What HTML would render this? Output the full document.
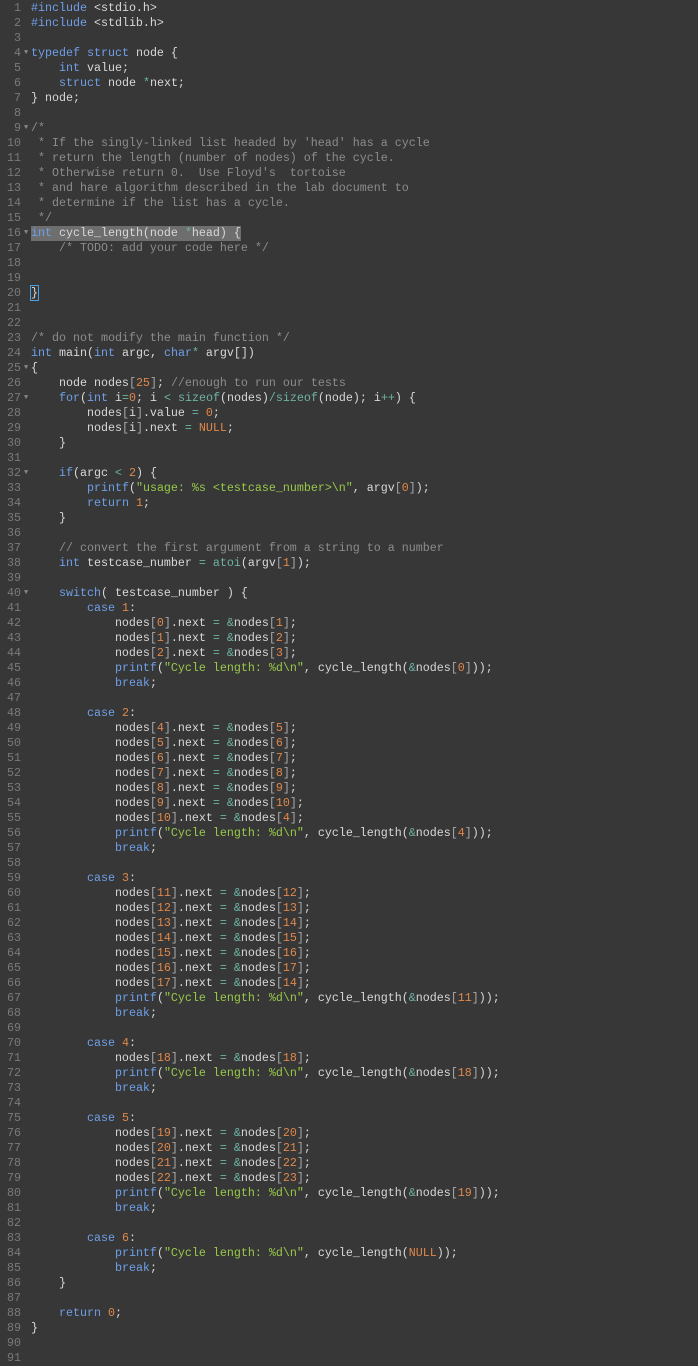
<!DOCTYPE html>
<html><head><meta charset="utf-8"><style>
html,body{margin:0;padding:0;background:#373737;width:698px;height:1358px;overflow:hidden}
#c{position:absolute;left:0;top:0.5px;font-family:"Liberation Mono",monospace;font-size:11.67px;color:#d8d8d8}
.l{height:15px;line-height:15px;white-space:pre;position:relative}
.g{position:absolute;left:0;width:21px;text-align:right;color:#7a7a7a}
.f{position:absolute;left:24px;color:#888;font-size:7px}
.t{position:absolute;left:31px}
em,i,s,u,b,var,dfn{font-style:normal;text-decoration:none;font-weight:normal}
em{color:#6f9fe8}i{color:#e0884a}s{color:#98c94a}u{color:#8c8c8c}b{color:#6db3a3}var{color:#a8a8a8}dfn{color:#6db3a3}
.hl{background:#6e6e6e}
.cur{outline:1px solid #4a9fe0}
</style></head><body><div id="c">
<div class="l"><span class="g">1</span><span class="t"><em>#include</em> &lt;stdio.h&gt;</span></div>
<div class="l"><span class="g">2</span><span class="t"><em>#include</em> &lt;stdlib.h&gt;</span></div>
<div class="l"><span class="g">3</span></div>
<div class="l"><span class="g">4</span><span class="f">▼</span><span class="t"><em>typedef</em> <em>struct</em> node {</span></div>
<div class="l"><span class="g">5</span><span class="t">    <em>int</em> value;</span></div>
<div class="l"><span class="g">6</span><span class="t">    <em>struct</em> node <b>*</b>next;</span></div>
<div class="l"><span class="g">7</span><span class="t">} node;</span></div>
<div class="l"><span class="g">8</span></div>
<div class="l"><span class="g">9</span><span class="f">▼</span><span class="t"><u>/*</u></span></div>
<div class="l"><span class="g">10</span><span class="t"><u> * If the singly-linked list headed by 'head' has a cycle</u></span></div>
<div class="l"><span class="g">11</span><span class="t"><u> * return the length (number of nodes) of the cycle.</u></span></div>
<div class="l"><span class="g">12</span><span class="t"><u> * Otherwise return 0.  Use Floyd's  tortoise</u></span></div>
<div class="l"><span class="g">13</span><span class="t"><u> * and hare algorithm described in the lab document to</u></span></div>
<div class="l"><span class="g">14</span><span class="t"><u> * determine if the list has a cycle.</u></span></div>
<div class="l"><span class="g">15</span><span class="t"><u> */</u></span></div>
<div class="l"><span class="g">16</span><span class="f">▼</span><span class="t hl"><em>int</em> cycle_length(node <b>*</b>head) {</span></div>
<div class="l"><span class="g">17</span><span class="t"><u>    /* TODO: add your code here */</u></span></div>
<div class="l"><span class="g">18</span></div>
<div class="l"><span class="g">19</span></div>
<div class="l"><span class="g">20</span><span class="t"><span class="cur">}</span></span></div>
<div class="l"><span class="g">21</span></div>
<div class="l"><span class="g">22</span></div>
<div class="l"><span class="g">23</span><span class="t"><u>/* do not modify the main function */</u></span></div>
<div class="l"><span class="g">24</span><span class="t"><em>int</em> main(<em>int</em> argc, <em>char</em><b>*</b> argv[])</span></div>
<div class="l"><span class="g">25</span><span class="f">▼</span><span class="t">{</span></div>
<div class="l"><span class="g">26</span><span class="t">    node nodes<var>[</var><i>25</i><var>]</var>; <u>//enough to run our tests</u></span></div>
<div class="l"><span class="g">27</span><span class="f">▼</span><span class="t">    <em>for</em>(<em>int</em> i<b>=</b><i>0</i>; i <b>&lt;</b> <dfn>sizeof</dfn>(nodes)<b>/</b><dfn>sizeof</dfn>(node); i<b>++</b>) {</span></div>
<div class="l"><span class="g">28</span><span class="t">        nodes<var>[</var>i<var>]</var>.value <b>=</b> <i>0</i>;</span></div>
<div class="l"><span class="g">29</span><span class="t">        nodes<var>[</var>i<var>]</var>.next <b>=</b> <i>NULL</i>;</span></div>
<div class="l"><span class="g">30</span><span class="t">    }</span></div>
<div class="l"><span class="g">31</span></div>
<div class="l"><span class="g">32</span><span class="f">▼</span><span class="t">    <em>if</em>(argc <b>&lt;</b> <i>2</i>) {</span></div>
<div class="l"><span class="g">33</span><span class="t">        <em>printf</em>(<s>"usage: %s &lt;testcase_number&gt;\n"</s>, argv<var>[</var><i>0</i><var>]</var>);</span></div>
<div class="l"><span class="g">34</span><span class="t">        <em>return</em> <i>1</i>;</span></div>
<div class="l"><span class="g">35</span><span class="t">    }</span></div>
<div class="l"><span class="g">36</span></div>
<div class="l"><span class="g">37</span><span class="t"><u>    // convert the first argument from a string to a number</u></span></div>
<div class="l"><span class="g">38</span><span class="t">    <em>int</em> testcase_number <b>=</b> <dfn>atoi</dfn>(argv<var>[</var><i>1</i><var>]</var>);</span></div>
<div class="l"><span class="g">39</span></div>
<div class="l"><span class="g">40</span><span class="f">▼</span><span class="t">    <em>switch</em>( testcase_number ) {</span></div>
<div class="l"><span class="g">41</span><span class="t">        <em>case</em> <i>1</i>:</span></div>
<div class="l"><span class="g">42</span><span class="t">            nodes<var>[</var><i>0</i><var>]</var>.next <b>=</b> <b>&amp;</b>nodes<var>[</var><i>1</i><var>]</var>;</span></div>
<div class="l"><span class="g">43</span><span class="t">            nodes<var>[</var><i>1</i><var>]</var>.next <b>=</b> <b>&amp;</b>nodes<var>[</var><i>2</i><var>]</var>;</span></div>
<div class="l"><span class="g">44</span><span class="t">            nodes<var>[</var><i>2</i><var>]</var>.next <b>=</b> <b>&amp;</b>nodes<var>[</var><i>3</i><var>]</var>;</span></div>
<div class="l"><span class="g">45</span><span class="t">            <em>printf</em>(<s>"Cycle length: %d\n"</s>, cycle_length(<b>&amp;</b>nodes<var>[</var><i>0</i><var>]</var>));</span></div>
<div class="l"><span class="g">46</span><span class="t">            <em>break</em>;</span></div>
<div class="l"><span class="g">47</span></div>
<div class="l"><span class="g">48</span><span class="t">        <em>case</em> <i>2</i>:</span></div>
<div class="l"><span class="g">49</span><span class="t">            nodes<var>[</var><i>4</i><var>]</var>.next <b>=</b> <b>&amp;</b>nodes<var>[</var><i>5</i><var>]</var>;</span></div>
<div class="l"><span class="g">50</span><span class="t">            nodes<var>[</var><i>5</i><var>]</var>.next <b>=</b> <b>&amp;</b>nodes<var>[</var><i>6</i><var>]</var>;</span></div>
<div class="l"><span class="g">51</span><span class="t">            nodes<var>[</var><i>6</i><var>]</var>.next <b>=</b> <b>&amp;</b>nodes<var>[</var><i>7</i><var>]</var>;</span></div>
<div class="l"><span class="g">52</span><span class="t">            nodes<var>[</var><i>7</i><var>]</var>.next <b>=</b> <b>&amp;</b>nodes<var>[</var><i>8</i><var>]</var>;</span></div>
<div class="l"><span class="g">53</span><span class="t">            nodes<var>[</var><i>8</i><var>]</var>.next <b>=</b> <b>&amp;</b>nodes<var>[</var><i>9</i><var>]</var>;</span></div>
<div class="l"><span class="g">54</span><span class="t">            nodes<var>[</var><i>9</i><var>]</var>.next <b>=</b> <b>&amp;</b>nodes<var>[</var><i>10</i><var>]</var>;</span></div>
<div class="l"><span class="g">55</span><span class="t">            nodes<var>[</var><i>10</i><var>]</var>.next <b>=</b> <b>&amp;</b>nodes<var>[</var><i>4</i><var>]</var>;</span></div>
<div class="l"><span class="g">56</span><span class="t">            <em>printf</em>(<s>"Cycle length: %d\n"</s>, cycle_length(<b>&amp;</b>nodes<var>[</var><i>4</i><var>]</var>));</span></div>
<div class="l"><span class="g">57</span><span class="t">            <em>break</em>;</span></div>
<div class="l"><span class="g">58</span></div>
<div class="l"><span class="g">59</span><span class="t">        <em>case</em> <i>3</i>:</span></div>
<div class="l"><span class="g">60</span><span class="t">            nodes<var>[</var><i>11</i><var>]</var>.next <b>=</b> <b>&amp;</b>nodes<var>[</var><i>12</i><var>]</var>;</span></div>
<div class="l"><span class="g">61</span><span class="t">            nodes<var>[</var><i>12</i><var>]</var>.next <b>=</b> <b>&amp;</b>nodes<var>[</var><i>13</i><var>]</var>;</span></div>
<div class="l"><span class="g">62</span><span class="t">            nodes<var>[</var><i>13</i><var>]</var>.next <b>=</b> <b>&amp;</b>nodes<var>[</var><i>14</i><var>]</var>;</span></div>
<div class="l"><span class="g">63</span><span class="t">            nodes<var>[</var><i>14</i><var>]</var>.next <b>=</b> <b>&amp;</b>nodes<var>[</var><i>15</i><var>]</var>;</span></div>
<div class="l"><span class="g">64</span><span class="t">            nodes<var>[</var><i>15</i><var>]</var>.next <b>=</b> <b>&amp;</b>nodes<var>[</var><i>16</i><var>]</var>;</span></div>
<div class="l"><span class="g">65</span><span class="t">            nodes<var>[</var><i>16</i><var>]</var>.next <b>=</b> <b>&amp;</b>nodes<var>[</var><i>17</i><var>]</var>;</span></div>
<div class="l"><span class="g">66</span><span class="t">            nodes<var>[</var><i>17</i><var>]</var>.next <b>=</b> <b>&amp;</b>nodes<var>[</var><i>14</i><var>]</var>;</span></div>
<div class="l"><span class="g">67</span><span class="t">            <em>printf</em>(<s>"Cycle length: %d\n"</s>, cycle_length(<b>&amp;</b>nodes<var>[</var><i>11</i><var>]</var>));</span></div>
<div class="l"><span class="g">68</span><span class="t">            <em>break</em>;</span></div>
<div class="l"><span class="g">69</span></div>
<div class="l"><span class="g">70</span><span class="t">        <em>case</em> <i>4</i>:</span></div>
<div class="l"><span class="g">71</span><span class="t">            nodes<var>[</var><i>18</i><var>]</var>.next <b>=</b> <b>&amp;</b>nodes<var>[</var><i>18</i><var>]</var>;</span></div>
<div class="l"><span class="g">72</span><span class="t">            <em>printf</em>(<s>"Cycle length: %d\n"</s>, cycle_length(<b>&amp;</b>nodes<var>[</var><i>18</i><var>]</var>));</span></div>
<div class="l"><span class="g">73</span><span class="t">            <em>break</em>;</span></div>
<div class="l"><span class="g">74</span></div>
<div class="l"><span class="g">75</span><span class="t">        <em>case</em> <i>5</i>:</span></div>
<div class="l"><span class="g">76</span><span class="t">            nodes<var>[</var><i>19</i><var>]</var>.next <b>=</b> <b>&amp;</b>nodes<var>[</var><i>20</i><var>]</var>;</span></div>
<div class="l"><span class="g">77</span><span class="t">            nodes<var>[</var><i>20</i><var>]</var>.next <b>=</b> <b>&amp;</b>nodes<var>[</var><i>21</i><var>]</var>;</span></div>
<div class="l"><span class="g">78</span><span class="t">            nodes<var>[</var><i>21</i><var>]</var>.next <b>=</b> <b>&amp;</b>nodes<var>[</var><i>22</i><var>]</var>;</span></div>
<div class="l"><span class="g">79</span><span class="t">            nodes<var>[</var><i>22</i><var>]</var>.next <b>=</b> <b>&amp;</b>nodes<var>[</var><i>23</i><var>]</var>;</span></div>
<div class="l"><span class="g">80</span><span class="t">            <em>printf</em>(<s>"Cycle length: %d\n"</s>, cycle_length(<b>&amp;</b>nodes<var>[</var><i>19</i><var>]</var>));</span></div>
<div class="l"><span class="g">81</span><span class="t">            <em>break</em>;</span></div>
<div class="l"><span class="g">82</span></div>
<div class="l"><span class="g">83</span><span class="t">        <em>case</em> <i>6</i>:</span></div>
<div class="l"><span class="g">84</span><span class="t">            <em>printf</em>(<s>"Cycle length: %d\n"</s>, cycle_length(<i>NULL</i>));</span></div>
<div class="l"><span class="g">85</span><span class="t">            <em>break</em>;</span></div>
<div class="l"><span class="g">86</span><span class="t">    }</span></div>
<div class="l"><span class="g">87</span></div>
<div class="l"><span class="g">88</span><span class="t">    <em>return</em> <i>0</i>;</span></div>
<div class="l"><span class="g">89</span><span class="t">}</span></div>
<div class="l"><span class="g">90</span></div>
<div class="l"><span class="g">91</span></div>
</div></body></html>
